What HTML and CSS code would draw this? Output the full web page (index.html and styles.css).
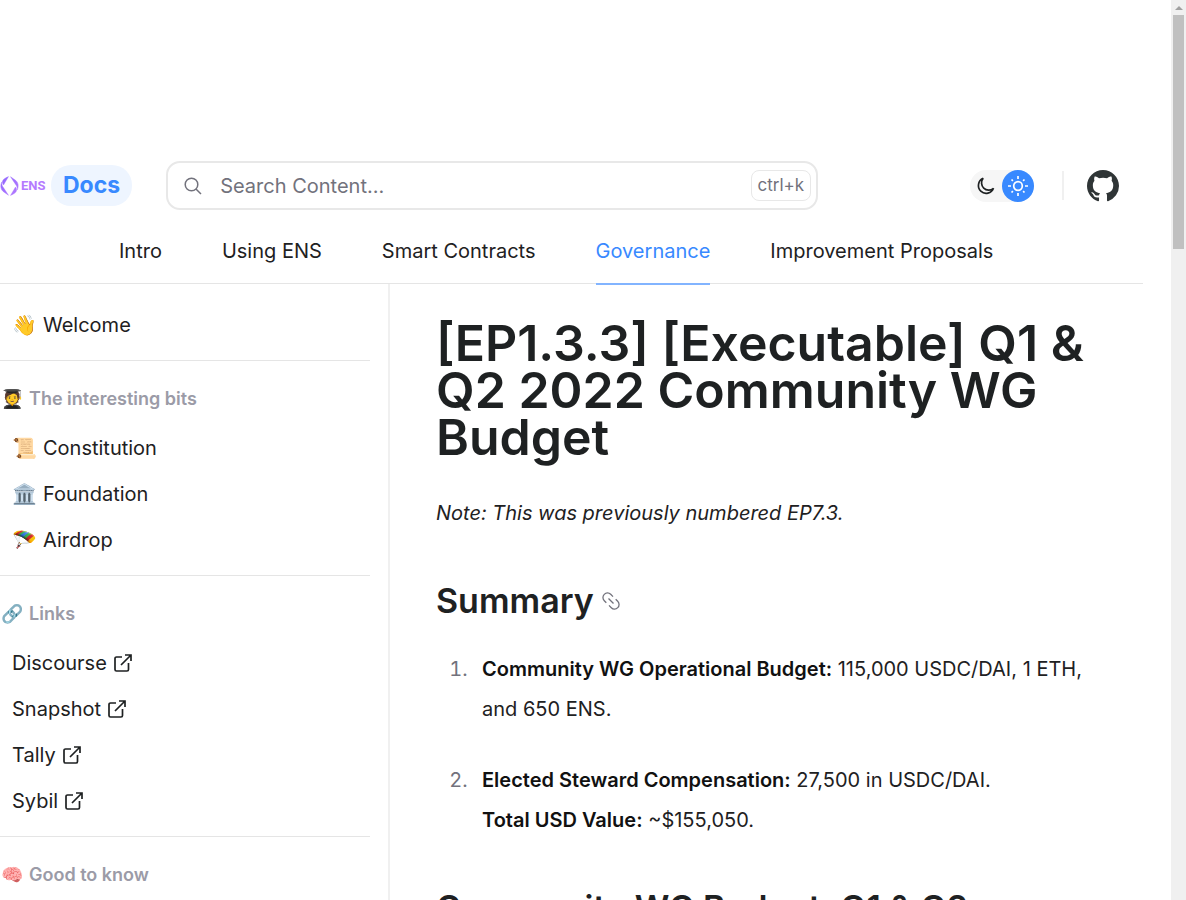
FILE: index.html
```html
<!DOCTYPE html>
<html lang="en">
<head>
<meta charset="utf-8">
<title>[EP1.3.3] [Executable] Q1 &amp; Q2 2022 Community WG Budget</title>
<link rel="stylesheet" href="styles.css">
</head>
<body>
<svg class="sprite" aria-hidden="true">
  <symbol id="external" viewBox="0 0 18 18"><path d="M8 3H2.500A1.500 1.500 0 0 0 1 4.500V15.500A1.500 1.500 0 0 0 2.500 17H13A1.500 1.500 0 0 0 14.500 15.500V9M7 11L17 1M11 1h6v6" fill="none" stroke="currentColor" stroke-width="1.700"/></symbol>
</svg>
<div class="page">
  <header class="header">
    <div class="topbar">
      <a class="brand" href="#">
        <svg class="brand-mark" viewBox="0 0 18 20" aria-hidden="true">
          <defs><linearGradient id="violet" x1="0" y1="0" x2="1" y2="1"><stop offset="0" stop-color="#8f65ff"/><stop offset="1" stop-color="#b57bff"/></linearGradient></defs>
          <path d="M8 .6L3 9C2.400 8.200 1.700 6.700 1.900 5.600C2.200 3.300 5 2 8 .6ZM1.300 6C-.4 9.500 0 13 2.600 15.400L8 19.300L2.900 11.600C1.500 9.800 1.100 8.300 1.300 6ZM10 19.400L15 11C15.600 11.800 16.300 13.300 16.100 14.400C15.800 16.700 13 18 10 19.400ZM16.700 14C18.400 10.500 18 7 15.400 4.600L10 .7L15.100 8.400C16.500 10.200 16.900 11.700 16.700 14Z" fill="url(#violet)" stroke="url(#violet)" stroke-width=".4"/>
        </svg>
        <span class="brand-name">ENS</span>
        <span class="brand-docs">Docs</span>
      </a>
      <label class="search">
        <svg class="search-icon" viewBox="0 0 18 18" aria-hidden="true"><circle cx="7.500" cy="7.500" r="6.300"/><path d="M12 12l5 5"/></svg>
        <input type="search" placeholder="Search Content..." aria-label="Search Content">
        <kbd>ctrl+k</kbd>
      </label>
      <div class="tools">
        <div class="theme">
          <button class="theme-option" aria-label="Dark theme"><svg viewBox="0 0 20 20" aria-hidden="true"><path d="M7.200 2.300A7.800 7.800 0 1 0 17.500 12.300A7.200 7.200 0 0 1 7.200 2.300Z"/></svg></button>
          <button class="theme-option active" aria-label="Light theme"><svg viewBox="0 0 20 20" aria-hidden="true"><circle cx="10" cy="10" r="4.300"/><path d="M10 0v3M10 17v3M0 10h3M17 10h3M3.500 3.500l1.400 1.400M15.100 15.100l1.400 1.400M3.500 16.500l1.400-1.400M15.100 4.900l1.400-1.400"/></svg></button>
        </div>
        <span class="rule"></span>
        <a class="github" href="#" aria-label="GitHub"><svg viewBox="0 0 16 16" aria-hidden="true"><path fill="currentColor" d="M8 0C3.580 0 0 3.580 0 8c0 3.540 2.290 6.530 5.470 7.590.4.070.55-.17.55-.38 0-.19-.01-.82-.01-1.490-2.010.37-2.530-.49-2.690-.94-.09-.23-.48-.94-.82-1.130-.28-.15-.68-.52-.01-.53.63-.01 1.080.58 1.230.82.72 1.210 1.870.87 2.330.66.07-.52.28-.87.51-1.070-1.780-.2-3.640-.89-3.640-3.950 0-.87.31-1.590.82-2.150-.08-.2-.36-1.020.08-2.120 0 0 .67-.21 2.200.82.64-.18 1.320-.27 2-.27s1.360.09 2 .27c1.530-1.040 2.200-.82 2.200-.82.44 1.100.16 1.920.08 2.120.51.56.82 1.270.82 2.150 0 3.070-1.870 3.750-3.650 3.950.29.25.54.73.54 1.480 0 1.070-.01 1.930-.01 2.200 0 .21.15.46.55.38A8.010 8.010 0 0 0 16 8c0-4.420-3.580-8-8-8Z"/></svg></a>
      </div>
    </div>
    <nav class="tabs">
      <a href="#">Intro</a>
      <a href="#">Using ENS</a>
      <a href="#">Smart Contracts</a>
      <a class="current" href="#">Governance</a>
      <a href="#">Improvement Proposals</a>
    </nav>
  </header>
  <div class="columns">
    <aside class="sidebar">
      <section>
        <a class="item" href="#"><span class="emoji">👋</span>Welcome</a>
      </section>
      <section>
        <h2><span class="emoji">🧑‍🎓</span>The interesting bits</h2>
        <a class="item" href="#"><span class="emoji">📜</span>Constitution</a>
        <a class="item" href="#"><span class="emoji">🏛️</span>Foundation</a>
        <a class="item" href="#"><span class="emoji">🪂</span>Airdrop</a>
      </section>
      <section>
        <h2><span class="emoji">🔗</span>Links</h2>
        <a class="item" href="#">Discourse<svg class="external"><use href="#external"/></svg></a>
        <a class="item" href="#">Snapshot<svg class="external"><use href="#external"/></svg></a>
        <a class="item" href="#">Tally<svg class="external"><use href="#external"/></svg></a>
        <a class="item" href="#">Sybil<svg class="external"><use href="#external"/></svg></a>
      </section>
      <section>
        <h2><span class="emoji">🧠</span>Good to know</h2>
      </section>
    </aside>
    <main class="article">
      <h1>[EP1.3.3] [Executable] Q1 &amp; Q2 2022 Community WG Budget</h1>
      <p class="note"><em>Note: This was previously numbered EP7.3.</em></p>
      <h2>Summary<a class="anchor" href="#" aria-label="Link to Summary"><svg viewBox="0 0 18 18" aria-hidden="true"><path d="M4.300 10.800L2.300 8.800A4.500 4.500 0 0 1 8.700 2.300L11 4.600M13.700 7.200L15.700 9.200A4.500 4.500 0 0 1 9.300 15.700L7 13.400M6.500 6.500L11.500 11.500"/></svg></a></h2>
      <ol>
        <li><strong>Community WG Operational Budget:</strong> 115,000 USDC/DAI, 1 ETH, and 650 ENS.</li>
        <li><strong>Elected Steward Compensation:</strong> 27,500 in USDC/DAI.<br><strong>Total USD Value:</strong> ~$155,050.</li>
      </ol>
      <h2>Community WG Budget: Q1 &amp; Q2</h2>
    </main>
  </div>
</div>
<div class="scrollbar" aria-hidden="true"><span class="arrow"></span><span class="thumb"></span></div>
</body>
</html>
```
FILE: styles.css
```css
* { box-sizing: border-box; }
body {
  margin: 0;
  height: 100vh;
  display: flex;
  overflow: hidden;
  background: #fff;
  color: #1e2122;
  font: 20px/30px Inter, sans-serif;
}
a { color: inherit; text-decoration: none; }
button { border: 0; padding: 0; background: none; }
.sprite { display: none; }
.page { flex: 1; min-width: 0; padding: 161px 28px 0 0; }

.header { border-bottom: 1px solid #e5e5e5; }
.topbar { display: flex; align-items: center; padding-right: 24px; }
.brand { display: flex; align-items: center; margin-right: 34px; }
.brand-mark { width: 19px; height: 20px; }
.brand-name { width: 24px; margin: 0 6px 0 2px; font: 700 13px/20px Roboto, sans-serif; color: #b57bff; }
.brand-docs {
  padding: 5px 12px 6px;
  border-radius: 20px;
  background: #eef5ff;
  color: #3889ff;
  font-size: 23px;
  font-weight: 700;
}
.search {
  flex: 1;
  max-width: 652px;
  height: 49px;
  display: flex;
  align-items: center;
  padding: 0 5px 0 16px;
  border: 2px solid #e8e8e8;
  border-radius: 14px;
}
.search-icon { width: 18px; height: 18px; fill: none; stroke: #72727c; stroke-width: 1.500; }
.search input {
  flex: 1;
  min-width: 0;
  margin-left: 18px;
  padding: 0;
  border: 0;
  outline: 0;
  font: inherit;
  color: inherit;
}
.search input::placeholder { color: #72727c; opacity: 1; }
kbd {
  padding: 0 6px;
  border: 1px solid #e8e8e8;
  border-radius: 8px;
  color: #72727c;
  font: 17px/29px Inter, sans-serif;
}
.tools { display: flex; align-items: center; margin-left: auto; }
.theme { display: flex; border-radius: 16px; background: #f6f6f6; }
.theme-option {
  width: 32px;
  height: 32px;
  display: grid;
  place-items: center;
  border-radius: 50%;
  color: #1e2122;
}
.theme-option.active { background: #3889ff; color: #fff; }
.theme-option svg { width: 20px; height: 20px; fill: none; stroke: currentColor; stroke-width: 1.700; }
.rule { width: 2px; height: 29px; margin: 0 23px 0 28px; background: #f0f0f0; }
.github { display: block; height: 32px; color: #2f3536; }
.github svg { width: 32px; height: 32px; }

.tabs { display: flex; gap: 60px; padding-left: 119px; margin-bottom: -2px; }
.tabs a { padding: 26px 0 17px; border-bottom: 2px solid transparent; }
.tabs .current { color: #3889ff; border-color: #82b4ff; }

.columns { display: flex; }
.sidebar { width: 390px; flex: none; padding-right: 18px; border-right: 2px solid #f0f0f0; }
.sidebar section { padding: 20px 0 12px; border-bottom: 1px solid #e5e5e5; }
.sidebar section:first-child { padding: 18px 0 12px; }
.sidebar h2 {
  display: flex;
  gap: 6px;
  margin: 0 0 8px 1px;
  padding: 3px 0;
  color: #9b9ba7;
  font: 600 18px/30px Inter, sans-serif;
}
.item { display: flex; align-items: center; gap: 7px; padding: 8px 12px; }
.emoji { width: 24px; font-size: 20px; }
.sidebar h2 .emoji { width: 22px; font-size: 18px; }
.external { width: 18px; height: 18px; }

.article { flex: 1; min-width: 0; padding: 36px 48px 0 46px; }
h1 { margin: 0 0 37px; font-size: 50px; line-height: 47px; font-weight: 600; }
.note { margin: 0; }
.article h2 {
  display: flex;
  align-items: center;
  gap: 8px;
  margin: 50px 0 25px;
  font-size: 34px;
  line-height: 46px;
  font-weight: 600;
}
.article ol + h2 { margin-top: 45px; }
.anchor { display: flex; color: #72727c; }
.anchor svg { width: 18px; height: 18px; fill: none; stroke: currentColor; stroke-width: 1.300; }
ol { margin: 0; padding-left: 37px; line-height: 40px; }
li { padding-left: 9px; }
li + li { margin-top: 31px; }
li::marker { color: #72727c; }
strong { font-weight: 600; color: #111; }

.scrollbar { width: 15px; flex: none; padding: 6px 2px 0; background: #f0f0f0; }
.arrow {
  display: block;
  width: 8px;
  margin: 0 auto 5px;
  border: 4px solid transparent;
  border-top: 0;
  border-bottom-color: #a0a0a0;
}
.thumb { display: block; height: 26vh; background: #c0c0c0; }
```
